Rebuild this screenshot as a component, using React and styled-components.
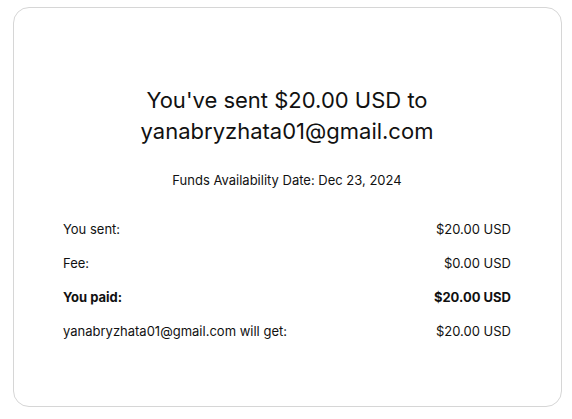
import React from 'react';
import styled, { createGlobalStyle } from 'styled-components';

const GlobalStyle = createGlobalStyle`
    body {
        margin: 0;
        background: #ffffff;
        font-family: Inter, "Liberation Sans", sans-serif;
        color: #111;
    }
`

const rows = [
    { label: 'You sent:', value: '$20.00 USD' },
    { label: 'Fee:', value: '$0.00 USD' },
    { label: 'You paid:', value: '$20.00 USD', bold: true },
    { label: 'yanabryzhata01@gmail.com will get:', value: '$20.00 USD' },
];

const App = () => {
    return (
        <Page>
            <GlobalStyle />
            <Card>
                <Title>
                    You've sent $20.00 USD to
                    <br />
                    yanabryzhata01@gmail.com
                </Title>
                <Availability>Funds Availability Date: Dec 23, 2024</Availability>
                <Summary>
                    {rows.map(row => (
                        <Row key={row.label} $bold={row.bold}>
                            <span>{row.label}</span>
                            <span>{row.value}</span>
                        </Row>
                    ))}
                </Summary>
            </Card>
        </Page>
    )
}

export default App;

const Page = styled.div`
    padding: 7px 10px 12px 13px;
`

const Card = styled.div`
    box-sizing: border-box;
    height: 400px;
    border: 1px solid #d6d6d6;
    border-radius: 16px;
    padding: 77px 50px 0 49px;
    display: flex;
    flex-direction: column;
    align-items: center;
`

const Title = styled.h1`
    margin: 0;
    font-size: 22px;
    font-weight: 400;
    line-height: 31px;
    text-align: center;
    color: #111;
`

const Availability = styled.p`
    margin: 24px 0 0;
    font-size: 13px;
    line-height: 18px;
`

const Summary = styled.div`
    width: 100%;
    margin-top: 31px;
    display: flex;
    flex-direction: column;
    gap: 16px;
`

const Row = styled.div`
    display: flex;
    justify-content: space-between;
    font-size: 13px;
    line-height: 18px;
    font-weight: ${props => props.$bold ? 700 : 400};
    color: #111;
`
